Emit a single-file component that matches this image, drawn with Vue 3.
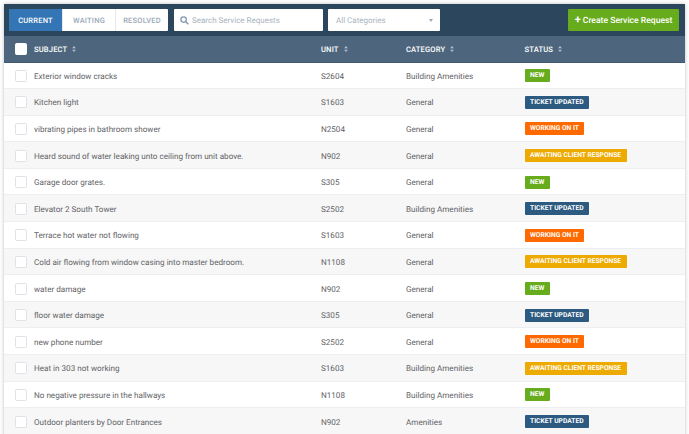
<template>
  <div class="page">
    <div class="card">
      <div class="toolbar">
        <div class="tabs">
          <button
            v-for="tab in tabs"
            :key="tab"
            :class="['tab', { active: tab === 'CURRENT' }]"
          >{{ tab }}</button>
        </div>
        <div class="search">
          <svg width="9" height="9" viewBox="0 0 10 10" fill="none">
            <circle cx="4" cy="4" r="3" stroke="#7f97ad" stroke-width="1.4" />
            <path d="M6.2 6.2 9.2 9.2" stroke="#7f97ad" stroke-width="1.6" />
          </svg>
          <span>Search Service Requests</span>
        </div>
        <div class="select">
          <span>All Categories</span>
          <i class="caret"></i>
        </div>
        <button class="create"><span class="plus">+</span> Create Service Request</button>
      </div>

      <div class="row head">
        <div class="cell-check"><span class="check white"></span></div>
        <div class="col-subject">SUBJECT <svg class="sort" width="4" height="6" viewBox="0 0 5 8"><path d="M2.5 0 5 3H0zM2.5 8 0 5h5z" fill="#b4c2ce" /></svg></div>
        <div class="col-unit">UNIT <svg class="sort" width="4" height="6" viewBox="0 0 5 8"><path d="M2.5 0 5 3H0zM2.5 8 0 5h5z" fill="#b4c2ce" /></svg></div>
        <div class="col-category">CATEGORY <svg class="sort" width="4" height="6" viewBox="0 0 5 8"><path d="M2.5 0 5 3H0zM2.5 8 0 5h5z" fill="#b4c2ce" /></svg></div>
        <div class="col-status">STATUS <svg class="sort" width="4" height="6" viewBox="0 0 5 8"><path d="M2.5 0 5 3H0zM2.5 8 0 5h5z" fill="#b4c2ce" /></svg></div>
      </div>

      <div v-for="(item, i) in items" :key="i" :class="['row', 'body', { odd: i % 2 === 1 }]">
        <div class="cell-check"><span class="check"></span></div>
        <div class="col-subject">{{ item[0] }}</div>
        <div class="col-unit">{{ item[1] }}</div>
        <div class="col-category">{{ item[2] }}</div>
        <div class="col-status">
          <span :class="['badge', statuses[i % 4].cls]">{{ statuses[i % 4].label }}</span>
        </div>
      </div>
    </div>
  </div>
</template>

<script setup>
const tabs = ['CURRENT', 'WAITING', 'RESOLVED'];

const statuses = [
  { label: 'NEW', cls: 'new' },
  { label: 'TICKET UPDATED', cls: 'updated' },
  { label: 'WORKING ON IT', cls: 'working' },
  { label: 'AWAITING CLIENT RESPONSE', cls: 'awaiting' },
];

const items = [
  ['Exterior window cracks', 'S2604', 'Building Amenities'],
  ['Kitchen light', 'S1603', 'General'],
  ['vibrating pipes in bathroom shower', 'N2504', 'General'],
  ['Heard sound of water leaking unto ceiling from unit above.', 'N902', 'General'],
  ['Garage door grates.', 'S305', 'General'],
  ['Elevator 2 South Tower', 'S2502', 'Building Amenities'],
  ['Terrace hot water not flowing', 'S1603', 'General'],
  ['Cold air flowing from window casing into master bedroom.', 'N1108', 'General'],
  ['water damage', 'N902', 'General'],
  ['floor water damage', 'S305', 'General'],
  ['new phone number', 'S2502', 'General'],
  ['Heat in 303 not working', 'S1603', 'Building Amenities'],
  ['No negative pressure in the hallways', 'N1108', 'Building Amenities'],
  ['Outdoor planters by Door Entrances', 'N902', 'Amenities'],
];
</script>

<style>
html, body {
  margin: 0;
  background: #fff;
  overflow: hidden;
}
</style>

<style scoped>
.page {
  width: 689px;
  height: 434px;
  padding: 4px 4px 0 4px;
  box-sizing: border-box;
  overflow: hidden;
  font-family: Roboto, sans-serif;
  text-rendering: geometricPrecision;
}

.card {
  box-shadow: 0 0 4px rgba(0, 0, 0, 0.25);
  height: 434px;
}

.toolbar {
  display: flex;
  align-items: center;
  height: 32px;
  padding: 0 6px 0 5px;
  background: #2b465d;
}

.tabs {
  display: flex;
  height: 22px;
  background: #fff;
  border-radius: 1px;
}

.tab {
  border: none;
  background: transparent;
  padding: 1px 0 0;
  width: 53px;
  font-family: inherit;
  font-size: 7.5px;
  font-weight: 500;
  letter-spacing: 0.2px;
  color: #9aa9b7;
  border-left: 1px solid #e6e9ec;
  text-rendering: geometricPrecision;
}

.tab.active {
  background: #3476b5;
  color: #fff;
  border-left: none;
}

.search {
  display: flex;
  align-items: center;
  gap: 3px;
  width: 149px;
  height: 22px;
  margin-left: 6px;
  padding: 1px 0 0 6px;
  box-sizing: border-box;
  background: #fff;
  border-radius: 1px;
  font-size: 8px;
  color: #aab4bd;
}

.select {
  display: flex;
  align-items: center;
  justify-content: space-between;
  width: 111.5px;
  height: 22px;
  margin-left: 5px;
  padding: 1px 7px 0 8px;
  box-sizing: border-box;
  background: #fff;
  border-radius: 1px;
  font-size: 8px;
  color: #aab4bd;
}

.caret {
  width: 0;
  height: 0;
  border-left: 2.5px solid transparent;
  border-right: 2.5px solid transparent;
  border-top: 3px solid #9aa9b7;
}

.create {
  margin-left: auto;
  width: 111px;
  height: 22px;
  border: none;
  padding: 1px 0 0;
  background: #67ac1c;
  border-radius: 1px;
  color: #fff;
  font-family: inherit;
  font-size: 8.6px;
  font-weight: 500;
  white-space: nowrap;
  text-rendering: geometricPrecision;
}

.plus {
  font-weight: 700;
  font-size: 11px;
  line-height: 8px;
}

.row {
  display: flex;
  align-items: center;
  box-sizing: border-box;
}

.head {
  height: 26.5px;
  padding-top: 1px;
  background: #4e667d;
  border-bottom: 1px solid #425a70;
  color: #fff;
  font-size: 7.6px;
  font-weight: 500;
  letter-spacing: 0.15px;
}

.sort {
  margin-left: 3px;
  vertical-align: -0.5px;
}

.body {
  height: 26.6px;
  padding-top: 1px;
  background: #fff;
  border-bottom: 1px solid #eceef0;
  color: #5f6266;
  font-size: 8.1px;
}

.body.odd {
  background: #f7f7f7;
}

.cell-check {
  width: 30px;
  padding-left: 11px;
  box-sizing: border-box;
  display: flex;
  align-items: center;
}

.check {
  width: 10px;
  height: 10px;
  background: #fff;
  border: 1px solid #dde3e9;
  border-radius: 1.5px;
}

.check.white {
  border-color: #fff;
}

.col-subject {
  width: 287px;
}

.col-unit {
  width: 85px;
}

.col-category {
  width: 118.5px;
}

.col-status {
  flex: 1;
}

.badge {
  display: inline-block;
  height: 13px;
  line-height: 13px;
  padding: 0 5.5px;
  border-radius: 1px;
  color: #fff;
  font-size: 6.7px;
  font-weight: 700;
}

.new {
  background: #67ac1c;
}

.updated {
  background: #2c5a80;
}

.working {
  background: #ff6a00;
}

.awaiting {
  background: #edaa00;
}
</style>
